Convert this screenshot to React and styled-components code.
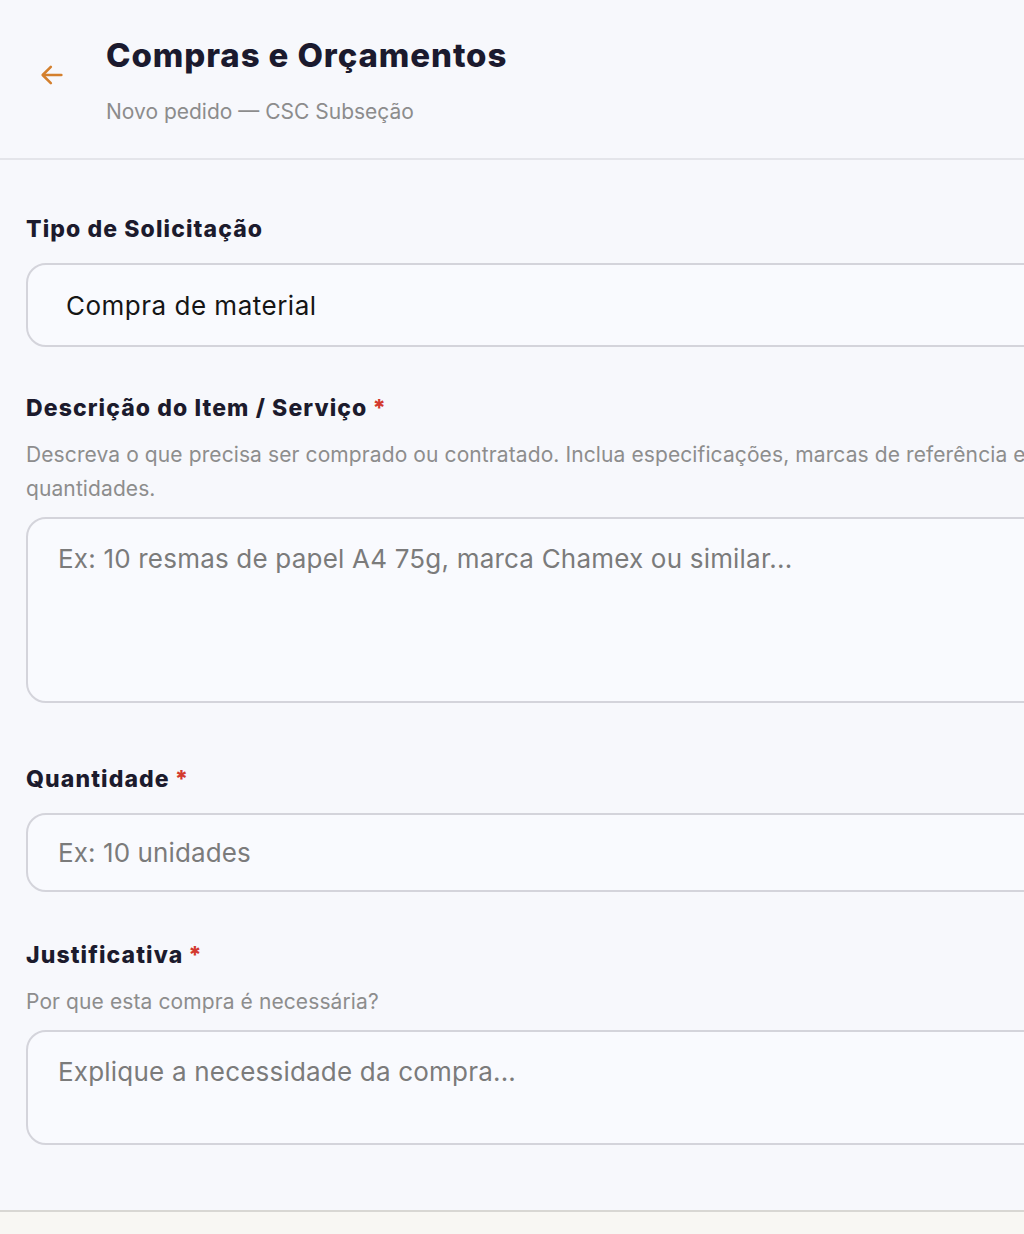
import React from 'react';
import styled, { createGlobalStyle } from 'styled-components';

const GlobalStyle = createGlobalStyle`
  html, body {
    margin: 0;
    padding: 0;
    background: #f8f7f3;
    overflow: hidden;
  }
  * { box-sizing: border-box; }
`;

const font = `Inter, "Noto Sans", sans-serif`;

const Panel = styled.div`
  width: 1120px;
  height: 1212px;
  background: #f7f8fc;
  border-bottom: 2px solid #d8d7d3;
  font-family: ${font};
`;

const Header = styled.header`
  display: flex;
  align-items: flex-start;
  gap: 40px;
  padding: 35px 38px 0 38px;
  height: 160px;
  border-bottom: 2px solid #e4e5ea;
`;

const BackButton = styled.button`
  border: none;
  background: none;
  padding: 0;
  margin-top: 26px;
  width: 28px;
  height: 28px;
  display: flex;
  align-items: center;
  justify-content: center;
  color: #d4802e;
  cursor: pointer;
`;

const TitleBlock = styled.div`
  display: flex;
  flex-direction: column;
  gap: 23px;
`;

const Title = styled.h1`
  margin: 0;
  font-size: 33px;
  line-height: 40px;
  font-weight: 800;
  letter-spacing: 0.9px;
  color: #1b1a2e;
`;

const Subtitle = styled.div`
  font-size: 21px;
  line-height: 28px;
  color: #8c8c8c;
`;

const Form = styled.form`
  display: flex;
  flex-direction: column;
  padding: 54px 0 0 26px;
`;

const Field = styled.div`
  display: flex;
  flex-direction: column;
  margin-bottom: ${({ $after }) => $after}px;
`;

const Label = styled.label`
  font-size: 23px;
  line-height: 30px;
  font-weight: 800;
  letter-spacing: 1.1px;
  color: #1c1b2d;
  margin-bottom: ${({ $help }) => ($help ? 15 : 19)}px;
`;

const Required = styled.span`
  color: #d33a2f;
  margin-left: 5px;
`;

const Help = styled.p`
  margin: 0 0 11px;
  max-width: 1040px;
  font-size: 21px;
  line-height: 34px;
  letter-spacing: 0.1px;
  color: #8d8d8d;
`;

const boxStyles = `
  width: 100%;
  border: 2px solid #d4d4db;
  border-radius: 20px;
  background: #f9fafe;
  font-family: ${font};
  outline: none;
`;

const Select = styled.div`
  ${boxStyles}
  height: 84px;
  display: flex;
  align-items: center;
  padding: 0 38px;
  font-size: 26px;
  letter-spacing: 0.5px;
  color: #151515;
`;

const Input = styled.input`
  ${boxStyles}
  height: 79px;
  padding: 0 30px;
  font-size: 26px;
  letter-spacing: 0.1px;
  color: #151515;
  &::placeholder { color: #7b7b7b; }
`;

const TextArea = styled.textarea`
  ${boxStyles}
  height: ${({ $h }) => $h}px;
  padding: 22px 30px;
  font-size: 26px;
  line-height: 36px;
  letter-spacing: 0.2px;
  color: #151515;
  resize: none;
  &::placeholder { color: #7b7b7b; }
`;

const ArrowLeft = () => (
  <svg width="28" height="28" viewBox="0 0 24 24" fill="none" stroke="currentColor" strokeWidth="2.2" strokeLinecap="round" strokeLinejoin="round">
    <path d="M20 12H5" />
    <path d="M11 5l-7 7 7 7" />
  </svg>
);

export default function App() {
  return (
    <>
      <GlobalStyle />
      <Panel>
        <Header>
          <BackButton type="button" aria-label="Voltar">
            <ArrowLeft />
          </BackButton>
          <TitleBlock>
            <Title>Compras e Orçamentos</Title>
            <Subtitle>Novo pedido — CSC Subseção</Subtitle>
          </TitleBlock>
        </Header>
        <Form>
          <Field $after={46}>
            <Label>Tipo de Solicitação</Label>
            <Select>Compra de material</Select>
          </Field>
          <Field $after={61}>
            <Label $help>Descrição do Item / Serviço<Required>*</Required></Label>
            <Help>
              Descreva o que precisa ser comprado ou contratado. Inclua especificações, marcas de referência e
              quantidades.
            </Help>
            <TextArea $h={186} placeholder="Ex: 10 resmas de papel A4 75g, marca Chamex ou similar..." />
          </Field>
          <Field $after={48}>
            <Label>Quantidade<Required>*</Required></Label>
            <Input placeholder="Ex: 10 unidades" />
          </Field>
          <Field $after={0}>
            <Label $help>Justificativa<Required>*</Required></Label>
            <Help>Por que esta compra é necessária?</Help>
            <TextArea $h={115} placeholder="Explique a necessidade da compra..." />
          </Field>
        </Form>
      </Panel>
    </>
  );
}
